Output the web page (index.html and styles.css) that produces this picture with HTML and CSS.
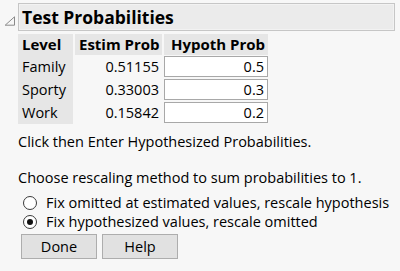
FILE: index.html
```html
<!DOCTYPE html>
<html>
<head>
<meta charset="utf-8">
<link rel="stylesheet" href="styles.css">
</head>
<body>
<div class="panel">
  <div class="outline">
    <svg class="disclosure" width="12" height="10" viewBox="0 0 12 10"><path d="M10.5 0.8 L10.5 9.2 L1.2 9.2 Z" fill="none" stroke="#8a8a8a" stroke-width="1"/></svg>
    <div class="title">Test Probabilities</div>
  </div>
  <div class="body">
    <div class="grid">
      <div class="hd">Level</div>
      <div class="hd r">Estim Prob</div>
      <div class="hd r">Hypoth Prob</div>

      <div class="lvl">Family</div>
      <div class="num">0.51155</div>
      <div class="inp"><span class="box">0.5</span></div>

      <div class="lvl">Sporty</div>
      <div class="num">0.33003</div>
      <div class="inp"><span class="box">0.3</span></div>

      <div class="lvl">Work</div>
      <div class="num">0.15842</div>
      <div class="inp"><span class="box">0.2</span></div>
    </div>
    <p class="msg">Click then Enter Hypothesized Probabilities.</p>
    <p class="msg choose">Choose rescaling method to sum probabilities to 1.</p>
    <div class="radio first"><span class="dot"></span>Fix omitted at estimated values, rescale hypothesis</div>
    <div class="radio"><span class="dot on"></span>Fix hypothesized values, rescale omitted</div>
    <div class="buttons">
      <span class="btn">Done</span>
      <span class="btn">Help</span>
    </div>
  </div>
</div>
</body>
</html>
```

FILE: styles.css
```css
html, body {
  margin: 0;
  padding: 0;
  background: #f7f7f7;
}
body {
  font-family: "Open Sans", "Noto Sans", sans-serif;
  font-size: 14.5px;
  color: #000;
  width: 400px;
  height: 271px;
  overflow: hidden;
}
.panel {
  padding-top: 3px;
}
.outline {
  display: flex;
  align-items: flex-start;
}
.disclosure {
  margin: 13px 2px 0 4px;
  flex: none;
}
.title {
  width: 372px;
  height: 26px;
  border: 1px solid #c6c6c6;
  box-shadow: inset 0 0 0 1px #f2f2f2;
  background: #ebebeb;
  font-weight: bold;
  font-size: 17.5px;
  line-height: 26px;
  padding-left: 3px;
  box-sizing: content-box;
}
.body {
  padding-left: 18px;
  padding-top: 3px;
}
.grid {
  display: grid;
  grid-template-columns: 55px 87px 104px;
  column-gap: 2px;
  grid-template-rows: 21px;
  grid-auto-rows: 23px;
}
.hd {
  background: #e6e6e6;
  font-weight: bold;
  font-size: 15px;
  line-height: 21px;
  padding: 0 4px;
  white-space: nowrap;
}
.hd.r {
  text-align: right;
  padding-right: 3px;
}
.lvl {
  background: #e6e6e6;
  line-height: 23px;
  padding: 0 4px;
}
.num {
  text-align: right;
  line-height: 23px;
  padding-right: 3px;
}
.inp {
  display: flex;
  align-items: flex-start;
  padding-top: 1px;
}
.box {
  display: block;
  width: 100%;
  height: 21px;
  box-sizing: border-box;
  background: #fff;
  border: 1px solid #a8a8a8;
  text-align: right;
  line-height: 19px;
  padding-right: 3px;
}
.msg {
  margin: 8px 0 0 0;
  line-height: 20px;
}
.msg.choose {
  margin-top: 16px;
}
.radio {
  display: flex;
  align-items: center;
  height: 19px;
  margin-left: 5px;
  white-space: nowrap;
}
.radio.first {
  margin-top: 5px;
}
.dot {
  width: 14px;
  height: 14px;
  border: 1px solid #3a3a3a;
  border-radius: 50%;
  background: #fff;
  box-sizing: border-box;
  margin-right: 9px;
  position: relative;
  flex: none;
}
.dot.on::after {
  content: "";
  position: absolute;
  left: 3px;
  top: 3px;
  width: 6px;
  height: 6px;
  border-radius: 50%;
  background: #111;
}
.buttons {
  display: flex;
  gap: 5px;
  margin: 3px 0 0 3px;
}
.btn {
  width: 76px;
  height: 25px;
  box-sizing: border-box;
  border: 1px solid #adadad;
  background: #e1e1e1;
  text-align: center;
  line-height: 23px;
}
```
